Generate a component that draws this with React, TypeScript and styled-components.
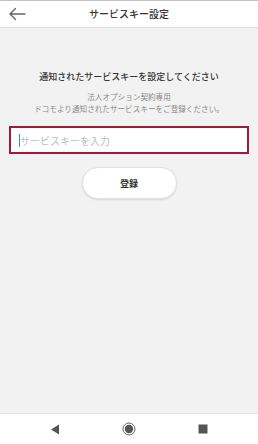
import styled, { createGlobalStyle } from "styled-components";

const GlobalStyle = createGlobalStyle`
  html, body {
    margin: 0;
    padding: 0;
    background: #f2f2f2;
  }
  * {
    box-sizing: border-box;
  }
`;

const Screen = styled.div`
  width: 258px;
  height: 444px;
  display: flex;
  flex-direction: column;
  background: #f2f2f2;
  font-family: "Noto Sans CJK JP", "Noto Sans", sans-serif;
  color: #333;
`;

const Header = styled.header`
  height: 28px;
  display: grid;
  grid-template-columns: 40px 1fr 40px;
  align-items: center;
  background: #fff;
  border-top: 1px solid #c4c4c4;
  border-bottom: 1px solid #dcdcdc;
`;

const BackButton = styled.button`
  border: none;
  background: none;
  padding: 0 0 0 8px;
  height: 100%;
  display: flex;
  align-items: center;
  cursor: pointer;
`;

const Title = styled.h1`
  margin: 0;
  text-align: center;
  font-size: 10px;
  font-weight: 500;
  line-height: 14px;
  color: #333;
`;

const Main = styled.main`
  flex: 1;
  display: flex;
  flex-direction: column;
  align-items: center;
  padding: 42px 8px 0;
`;

const Heading = styled.p`
  margin: 0;
  font-size: 9px;
  line-height: 13px;
  font-weight: 500;
  color: #333;
`;

const Note = styled.p<{ $gap?: number }>`
  margin: ${(p) => p.$gap ?? 0}px 0 0;
  font-size: 7.6px;
  line-height: 12px;
  color: #8a8a8a;
`;

const Field = styled.label`
  margin-top: 11px;
  width: 240px;
  height: 28px;
  display: flex;
  align-items: center;
  padding: 0 8px;
  background: #fff;
  border: 2px solid #a3183f;
`;

const Caret = styled.span`
  width: 1px;
  height: 13px;
  background: #2c9c86;
`;

const Input = styled.input`
  flex: 1;
  min-width: 0;
  border: none;
  outline: none;
  background: transparent;
  padding: 0;
  font-family: inherit;
  font-size: 10px;
  color: #333;
  caret-color: transparent;

  &::placeholder {
    color: #bdbdbd;
  }
`;

const SubmitButton = styled.button`
  margin-top: 13px;
  width: 95px;
  height: 32px;
  border-radius: 16px;
  border: 1px solid #e2e2e2;
  background: #fff;
  box-shadow: 0 1px 2px rgba(0, 0, 0, 0.12);
  font-family: inherit;
  font-size: 9px;
  font-weight: 700;
  color: #333;
  cursor: pointer;
`;

const NavBar = styled.nav`
  height: 31px;
  display: grid;
  grid-template-columns: repeat(3, 1fr);
  align-items: center;
  justify-items: center;
  background: #fff;
  border-top: 1px solid #e4e4e4;
  padding: 0 18px;
`;

const NavKey = styled.button`
  border: none;
  background: none;
  padding: 0;
  display: flex;
  align-items: center;
  justify-content: center;
`;

export default function App() {
  return (
    <>
      <GlobalStyle />
      <Screen>
        <Header>
          <BackButton aria-label="戻る">
            <svg width="18" height="14" viewBox="0 0 18 14" fill="none">
              <path
                d="M17 7H2M7.5 1.5L2 7l5.5 5.5"
                stroke="#666"
                strokeWidth="1.4"
                strokeLinecap="round"
                strokeLinejoin="round"
              />
            </svg>
          </BackButton>
          <Title>サービスキー設定</Title>
          <span />
        </Header>
        <Main>
          <Heading>通知されたサービスキーを設定してください</Heading>
          <Note $gap={8}>法人オプション契約専用</Note>
          <Note>ドコモより通知されたサービスキーをご登録ください。</Note>
          <Field>
            <Caret />
            <Input placeholder="サービスキーを入力" />
          </Field>
          <SubmitButton>登録</SubmitButton>
        </Main>
        <NavBar>
          <NavKey aria-label="back">
            <svg width="10" height="11" viewBox="0 0 10 11">
              <path d="M9 0.5V10.5L1 5.5Z" fill="#555" />
            </svg>
          </NavKey>
          <NavKey aria-label="home">
            <svg width="14" height="14" viewBox="0 0 14 14">
              <circle cx="7" cy="7" r="6" fill="none" stroke="#666" strokeWidth="1" />
              <circle cx="7" cy="7" r="4.2" fill="#555" />
            </svg>
          </NavKey>
          <NavKey aria-label="recent">
            <svg width="10" height="10" viewBox="0 0 10 10">
              <rect x="0.5" y="0.5" width="9" height="9" fill="#555" />
            </svg>
          </NavKey>
        </NavBar>
      </Screen>
    </>
  );
}
